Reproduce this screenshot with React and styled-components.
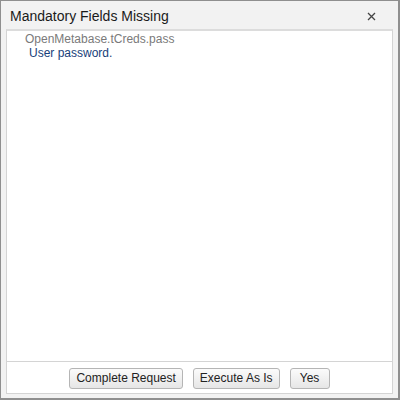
import React from "react";
import styled, { createGlobalStyle } from "styled-components";

const GlobalStyle = createGlobalStyle`
  html, body {
    margin: 0;
    padding: 0;
    background: #ffffff;
  }
  body {
    font-family: "Liberation Sans", Arial, sans-serif;
  }
`;

const Dialog = styled.div`
  width: 400px;
  height: 400px;
  box-sizing: border-box;
  border: 1px solid #8f8f8f;
  border-right-width: 2px;
  border-bottom-width: 2px;
  background: #f2f2f2;
  display: flex;
  flex-direction: column;
`;

const TitleBar = styled.div`
  height: 28px;
  display: flex;
  align-items: center;
  justify-content: space-between;
  padding: 0 21px 0 9px;
`;

const Title = styled.h1`
  margin: 0;
  font-size: 14px;
  font-weight: normal;
  color: #1a1a1a;
  padding-top: 2px;
`;

const CloseButton = styled.button`
  border: 0;
  background: none;
  padding: 0;
  width: 12px;
  height: 12px;
  display: flex;
  align-items: center;
  justify-content: center;
  cursor: pointer;
  margin-top: 2px;
`;

const Panel = styled.div`
  flex: 1;
  margin: 0 5px 4px 5px;
  background: #ffffff;
  border: 1px solid #d4d4d4;
  border-top: 2px solid #dcdcdc;
  display: flex;
  flex-direction: column;
`;

const Messages = styled.div`
  flex: 1;
  padding: 1px 0 0 18px;
  font-size: 12px;
  line-height: 14px;
`;

const FieldName = styled.div`
  color: #7a7a7a;
`;

const FieldDesc = styled.div`
  color: #17417a;
  padding-left: 4px;
`;

const Footer = styled.div`
  height: 32px;
  border-top: 1px solid #d4d4d4;
  display: flex;
  align-items: center;
  justify-content: center;
  gap: 10px;
  padding-top: 1px;
  box-sizing: border-box;
`;

const Button = styled.button`
  height: 21px;
  padding: 0 6px;
  font-family: "Liberation Sans", Arial, sans-serif;
  font-size: 12px;
  color: #222;
  border: 1px solid #b5b5b5;
  border-radius: 3px;
  background: linear-gradient(#fbfbfb, #e6e6e6);
  cursor: pointer;
  min-width: ${({ $min }) => $min || "0"};
`;

export default function App() {
  return (
    <>
      <GlobalStyle />
      <Dialog>
        <TitleBar>
          <Title>Mandatory Fields Missing</Title>
          <CloseButton aria-label="close">
            <svg width="9" height="9" viewBox="0 0 9 9">
              <path d="M1 1L8 8M8 1L1 8" stroke="#444" strokeWidth="1.3" />
            </svg>
          </CloseButton>
        </TitleBar>
        <Panel>
          <Messages>
            <FieldName>OpenMetabase.tCreds.pass</FieldName>
            <FieldDesc>User password.</FieldDesc>
          </Messages>
          <Footer>
            <Button>Complete Request</Button>
            <Button>Execute As Is</Button>
            <Button $min="40px">Yes</Button>
          </Footer>
        </Panel>
      </Dialog>
    </>
  );
}
